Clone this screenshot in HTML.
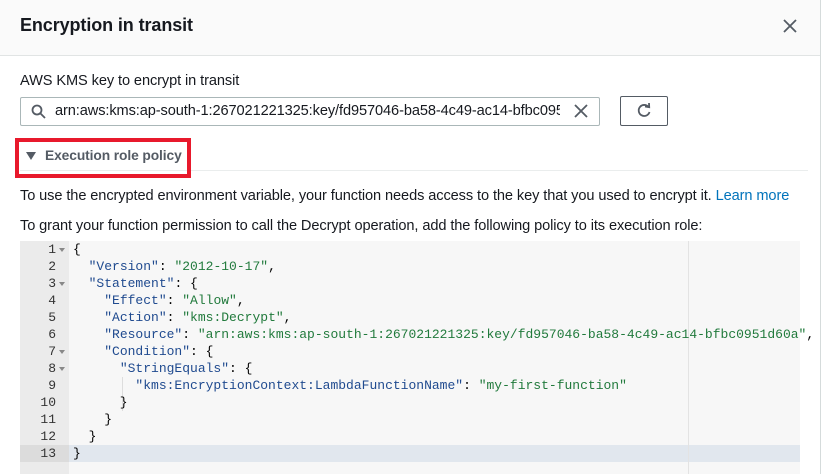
<!DOCTYPE html>
<html><head><style>
*{margin:0;padding:0;box-sizing:border-box}
body{width:821px;height:474px;overflow:hidden;background:#fff;font-family:"Liberation Sans",sans-serif;color:#16191f;position:relative}
.abs{position:absolute}
.hdr{left:0;top:0;width:820px;height:56px;background:#fafafa;border-bottom:1px solid #e1e4e4}
.edge{left:820px;top:0;width:1px;height:474px;background:#d5dbdb}
.title{left:20px;top:15px;font-size:18px;font-weight:bold;letter-spacing:-0.1px}
.t{font-size:14.6px;white-space:nowrap;letter-spacing:-0.1px}
.inp{left:20px;top:97px;width:580px;height:29px;border:1px solid #aab7b8;border-radius:2px}
.btn{left:620px;top:96px;width:48px;height:30px;border:1px solid #545b64;border-radius:2px}
.red{left:15px;top:138px;width:176px;height:40px;border:4px solid #e8192c}
.ed{left:20px;top:241px;width:780px;height:233px;background:#f7f7f7}
.gut{left:20px;top:241px;width:49px;height:233px;background:#ebebeb}
.code{font-family:"Liberation Mono",monospace;font-size:13px;line-height:17px;white-space:pre;color:#000}
.k{color:#1f4a8f}.s{color:#217a3c}
.ln{left:20px;top:241px;width:36px;text-align:right;color:#333}
.ar{position:absolute;left:59px;width:0;height:0;border-left:3px solid transparent;border-right:3px solid transparent;border-top:4px solid #888}
</style></head><body>
<div class="abs hdr"></div>
<div class="abs edge"></div>
<div class="abs title">Encryption in transit</div>
<svg class="abs" style="left:783px;top:19px" width="14" height="14"><path d="M1 1L13 13M13 1L1 13" stroke="#545b64" stroke-width="1.8"/></svg>
<div class="abs t" style="left:20px;top:73px">AWS KMS key to encrypt in transit</div>
<div class="abs inp"></div>
<svg class="abs" style="left:31px;top:104px" width="15" height="15"><circle cx="6" cy="6" r="4.5" fill="none" stroke="#545b64" stroke-width="1.8"/><path d="M9.5 9.5L14 14" stroke="#545b64" stroke-width="1.8"/></svg>
<div class="abs t" style="left:55px;top:103px;width:505px;overflow:hidden;color:#16191f">arn:aws:kms:ap-south-1:267021221325:key/fd957046-ba58-4c49-ac14-bfbc0951d60a</div>
<svg class="abs" style="left:574px;top:104px" width="14" height="14"><path d="M1 1L13 13M13 1L1 13" stroke="#545b64" stroke-width="1.8"/></svg>
<div class="abs btn"></div>
<svg class="abs" style="left:636px;top:102px" width="16" height="17"><path d="M12.5 5A5.5 5.5 0 1 0 13.5 10" fill="none" stroke="#545b64" stroke-width="1.8"/><path d="M9 4.5L13.2 5.2L13 1" fill="none" stroke="#545b64" stroke-width="1.8"/></svg>
<div class="abs" style="left:20px;top:170px;width:788px;height:1px;background:#eaeded"></div>
<div class="abs red"></div>
<svg class="abs" style="left:26px;top:152px" width="10" height="9"><path d="M0 0H10L5 8Z" fill="#545b64"/></svg>
<div class="abs t" style="left:45px;top:148px;font-weight:bold;color:#545b64;font-size:13.8px">Execution role policy</div>
<div class="abs t" style="left:20px;top:188px;color:#16191f">To use the encrypted environment variable, your function needs access to the key that you used to encrypt it. <span style="color:#0073bb">Learn more</span></div>
<div class="abs t" style="left:20px;top:218px">To grant your function permission to call the Decrypt operation, add the following policy to its execution role:</div>
<div class="abs ed"></div>
<div class="abs gut"></div>
<div class="abs" style="left:20px;top:445px;width:49px;height:17px;background:#dcdcdc"></div>
<div class="abs" style="left:69px;top:445px;width:731px;height:17px;background:#e1e7ee"></div>
<div class="abs" style="left:688px;top:241px;width:1px;height:233px;background:#e3e3e3"></div>
<div class="abs" style="left:122px;top:377px;width:1px;height:34px;background:#ddd"></div>
<div class="abs code ln">1
2
3
4
5
6
7
8
9
10
11
12
13</div>
<div class="ar" style="top:248px"></div>
<div class="ar" style="top:282px"></div>
<div class="ar" style="top:350px"></div>
<div class="ar" style="top:367px"></div>
<div class="abs code" style="left:73px;top:241px">{
  <span class="k">"Version"</span>: <span class="s">"2012-10-17"</span>,
  <span class="k">"Statement"</span>: {
    <span class="k">"Effect"</span>: <span class="s">"Allow"</span>,
    <span class="k">"Action"</span>: <span class="s">"kms:Decrypt"</span>,
    <span class="k">"Resource"</span>: <span class="s">"arn:aws:kms:ap-south-1:267021221325:key/fd957046-ba58-4c49-ac14-bfbc0951d60a"</span>,
    <span class="k">"Condition"</span>: {
      <span class="k">"StringEquals"</span>: {
        <span class="k">"kms:EncryptionContext:LambdaFunctionName"</span>: <span class="s">"my-first-function"</span>
      }
    }
  }
}</div>
</body></html>
